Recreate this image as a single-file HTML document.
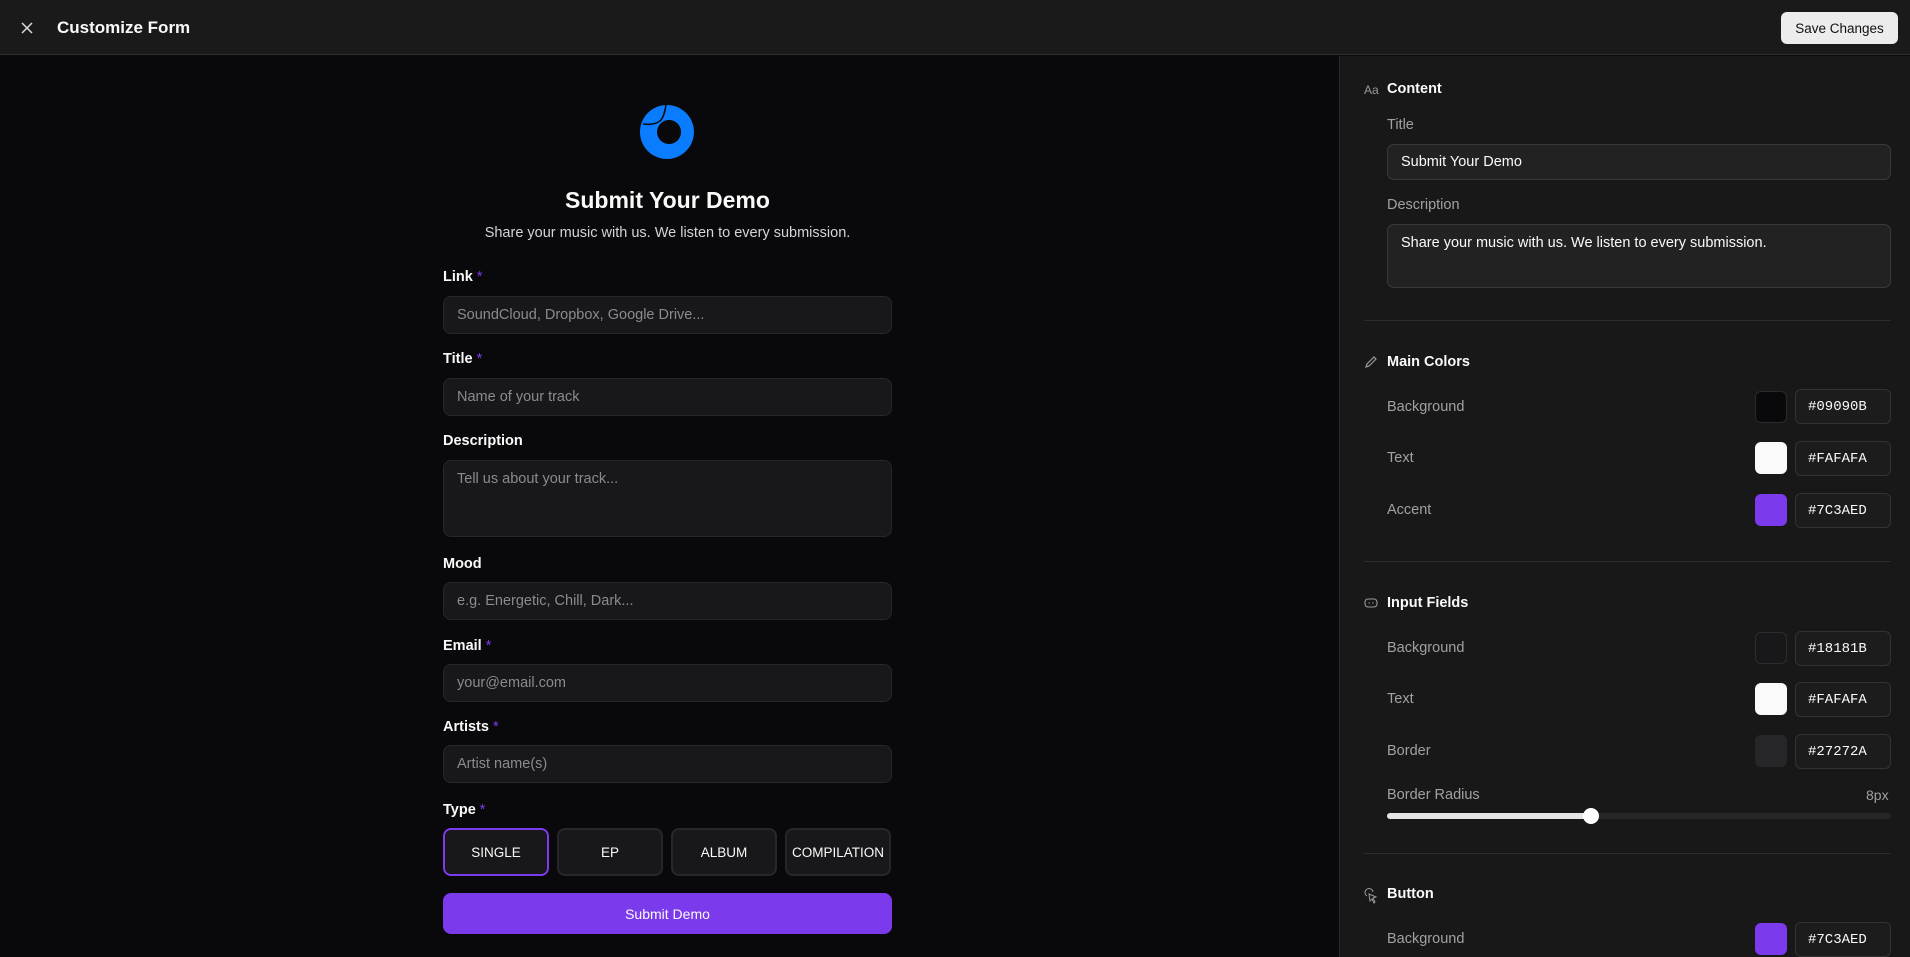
<!DOCTYPE html>
<html><head><style>
*{box-sizing:border-box;margin:0;padding:0}
body{width:1910px;height:957px;overflow:hidden;background:#09090b;font-family:"Liberation Sans",Arial,sans-serif;color:#fafafa;position:relative}
.hdr{position:absolute;left:0;top:0;width:1910px;height:55px;background:#1a1a1a;border-bottom:1px solid #2e2e2e}
.abs{position:absolute}
.save{position:absolute;left:1781px;top:12px;width:117px;height:32px;background:#ececec;color:#111;border-radius:6px;font-size:13.5px;display:flex;align-items:center;justify-content:center}
.panel{position:absolute;left:1339px;top:56px;width:571px;height:901px;background:#181818;border-left:1px solid #2a2a2a}
.lbl{position:absolute;left:443px;font-size:14.5px;font-weight:bold;color:#fafafa}
.lbl i{color:#7c3aed;font-style:normal;font-weight:normal}
.inp{position:absolute;left:443px;width:449px;height:38px;background:#18181b;border:1px solid #27272a;border-radius:8px;color:#8a8a90;font-size:14.5px;padding:0 13px;display:flex;align-items:center}
.tb{position:absolute;top:828px;width:106px;height:48px;background:#18181b;border:2px solid #27272a;border-radius:8px;font-size:13.5px;display:flex;align-items:center;justify-content:center;color:#fafafa}
.ph{position:absolute;font-size:14.5px;font-weight:bold;color:#fafafa}
.pl{position:absolute;left:1387px;font-size:14.5px;color:#a1a1a1}
.pin{position:absolute;left:1387px;width:504px;background:#222;border:1px solid #3a3a3a;border-radius:7px;font-size:14.5px;color:#fafafa;padding:0 13px}
.sw{position:absolute;left:1755px;width:32px;height:32px;border-radius:6px}
.hx{position:absolute;left:1795px;width:96px;height:35px;border:1px solid #333;border-radius:6px;background:#1c1c1c;font-family:"Liberation Mono",monospace;font-size:14px;color:#fafafa;padding-left:12px;display:flex;align-items:center}
.div{position:absolute;left:1364px;width:527px;height:1px;background:#2c2c2c}
.ic{position:absolute;left:1364px;color:#999;font-size:12px}
</style></head><body>
<div class="hdr"></div>
<svg class="abs" style="left:21px;top:22px" width="12" height="12" viewBox="0 0 12 12"><path d="M1 1L11 11M11 1L1 11" stroke="#ddd" stroke-width="1.5"/></svg>
<div class="abs" style="left:57px;top:18px;font-size:17px;font-weight:bold">Customize Form</div>
<div class="save">Save Changes</div>

<svg class="abs" style="left:639px;top:104px" width="56" height="56" viewBox="0 0 56 56"><path fill-rule="evenodd" d="M28 1A27 27 0 1 1 27.9 1ZM30 16A12 12 0 1 0 30.1 16Z" fill="#0a7cff"/><path d="M27 1C26 7 25 12 22 16C18 20 12 21 4 20" stroke="#09090b" stroke-width="1.5" fill="none"/></svg>
<div class="abs" style="left:443px;width:449px;top:187px;text-align:center;font-size:23px;font-weight:bold">Submit Your Demo</div>
<div class="abs" style="left:443px;width:449px;top:225px;text-align:center;font-size:14.5px;color:#d4d4d8">Share your music with us. We listen to every submission.</div>

<div class="lbl" style="top:269px">Link <i>*</i></div>
<div class="inp" style="top:296px">SoundCloud, Dropbox, Google Drive...</div>
<div class="lbl" style="top:351px">Title <i>*</i></div>
<div class="inp" style="top:378px">Name of your track</div>
<div class="lbl" style="top:433px">Description</div>
<div class="inp" style="top:460px;height:77px;align-items:flex-start;padding-top:10px">Tell us about your track...</div>
<div class="lbl" style="top:556px">Mood</div>
<div class="inp" style="top:582px">e.g. Energetic, Chill, Dark...</div>
<div class="lbl" style="top:638px">Email <i>*</i></div>
<div class="inp" style="top:664px">your@email.com</div>
<div class="lbl" style="top:719px">Artists <i>*</i></div>
<div class="inp" style="top:745px">Artist name(s)</div>
<div class="lbl" style="top:802px">Type <i>*</i></div>
<div class="tb" style="left:443px;border-color:#7c3aed">SINGLE</div>
<div class="tb" style="left:557px">EP</div>
<div class="tb" style="left:671px">ALBUM</div>
<div class="tb" style="left:785px">COMPILATION</div>
<div class="abs" style="left:443px;top:893px;width:449px;height:41px;background:#7c3aed;border-radius:8px;font-size:14px;display:flex;align-items:center;justify-content:center">Submit Demo</div>

<div class="panel"></div>
<div class="ic" style="top:83px">Aa</div>
<div class="ph" style="left:1387px;top:81px">Content</div>
<div class="pl" style="top:117px">Title</div>
<div class="pin" style="top:144px;height:36px;line-height:34px">Submit Your Demo</div>
<div class="pl" style="top:197px">Description</div>
<div class="pin" style="top:224px;height:64px;padding-top:10px">Share your music with us. We listen to every submission.</div>
<div class="div" style="top:320px"></div>
<svg class="abs" style="left:1364px;top:355px" width="14" height="14" viewBox="0 0 14 14"><path d="M2 12L3 9L10 2L12 4L5 11Z" fill="none" stroke="#999" stroke-width="1.2"/></svg>
<div class="ph" style="left:1387px;top:354px">Main Colors</div>
<div class="pl" style="top:399px">Background</div><div class="sw" style="top:391px;background:#09090b;border:1px solid #2a2a2a"></div><div class="hx" style="top:389px">#09090B</div>
<div class="pl" style="top:450px">Text</div><div class="sw" style="top:442px;background:#fafafa"></div><div class="hx" style="top:441px">#FAFAFA</div>
<div class="pl" style="top:502px">Accent</div><div class="sw" style="top:494px;background:#7c3aed"></div><div class="hx" style="top:493px">#7C3AED</div>
<div class="div" style="top:561px"></div>
<svg class="abs" style="left:1364px;top:597px" width="14" height="12" viewBox="0 0 14 12"><rect x="1" y="2" width="12" height="8" rx="3" fill="none" stroke="#999" stroke-width="1.1"/><path d="M4.5 6H6M8 6H9.5" stroke="#999" stroke-width="1.1"/></svg>
<div class="ph" style="left:1387px;top:595px">Input Fields</div>
<div class="pl" style="top:640px">Background</div><div class="sw" style="top:632px;background:#18181b;border:1px solid #2e2e2e"></div><div class="hx" style="top:631px">#18181B</div>
<div class="pl" style="top:691px">Text</div><div class="sw" style="top:683px;background:#fafafa"></div><div class="hx" style="top:682px">#FAFAFA</div>
<div class="pl" style="top:743px">Border</div><div class="sw" style="top:735px;background:#27272a"></div><div class="hx" style="top:734px">#27272A</div>
<div class="pl" style="top:787px">Border Radius</div>
<div class="abs" style="left:1866px;top:787px;font-size:14px;color:#a1a1a1">8px</div>
<div class="abs" style="left:1387px;top:813px;width:504px;height:6px;background:#262626;border-radius:3px"></div>
<div class="abs" style="left:1387px;top:813px;width:204px;height:6px;background:#e5e5e5;border-radius:3px"></div>
<div class="abs" style="left:1583px;top:808px;width:16px;height:16px;background:#fff;border-radius:50%"></div>
<div class="div" style="top:853px"></div>
<svg class="abs" style="left:1364px;top:888px" width="14" height="16" viewBox="0 0 14 16"><path d="M5 6L12 9L9 10L11 14L10 15L8 11L6 13Z" fill="none" stroke="#999" stroke-width="1"/><path d="M3 8A4 4 0 1 1 9 4" fill="none" stroke="#999" stroke-width="1"/></svg>
<div class="ph" style="left:1387px;top:886px">Button</div>
<div class="pl" style="top:931px">Background</div><div class="sw" style="top:923px;background:#7c3aed"></div><div class="hx" style="top:922px">#7C3AED</div>
</body></html>
